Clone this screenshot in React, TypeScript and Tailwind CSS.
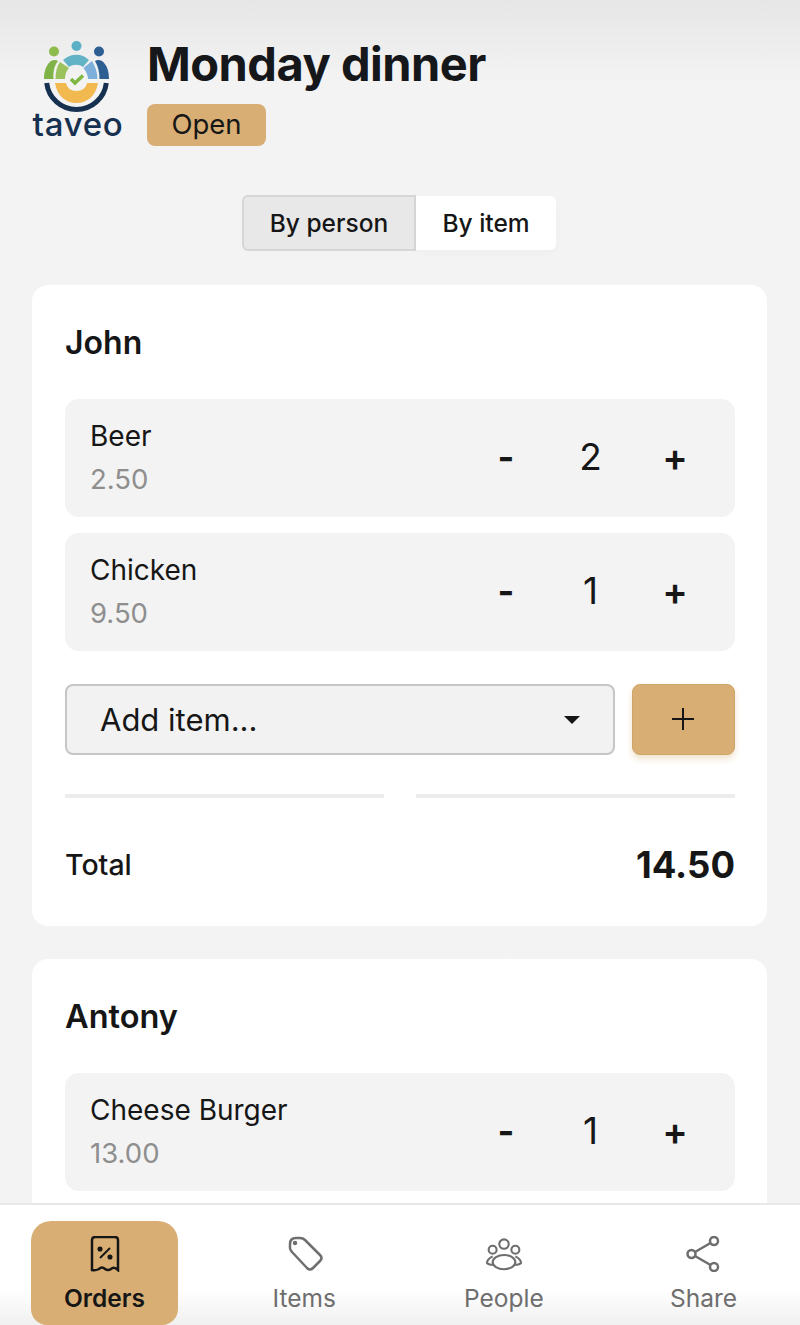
import React from "react";

const font = { fontFamily: "Inter, sans-serif" };

function Logo() {
  return (
    <svg width="92" height="104" viewBox="32 40 92 104" className="shrink-0">
      <circle cx="54" cy="51.500" r="5" fill="#8dbb4c" />
      <circle cx="76.500" cy="46" r="5" fill="#5ab0c4" />
      <circle cx="99" cy="51.500" r="5" fill="#2d5f93" />
      <path d="M44 79 C44 70 47 64 51 61 Q55 59 58 61 C54 66 53 72 53.500 79 Z" fill="#7fb347" />
      <path d="M55.500 79 C55.500 72 57 66 60 62 L69 68 C66 71 65 75 65 79 Z" fill="#9cc25e" />
      <path d="M63 60 C71 53 82 53 89 60 L83 67 C79 64 73 64 69 67 Z" fill="#62b3c5" />
      <path d="M92 61 C95 66 97.500 72 97.500 79 L88 79 C88 75 86 71 83.500 68 Z" fill="#7cb0da" />
      <path d="M95 61 Q98 59 102 61 C107 65 109 71 109 79 L99.500 79 C99.500 72 98 66 95 61 Z" fill="#2d5f93" />
      <path d="M46.700 83 A30 30 0 0 0 106.300 83" fill="none" stroke="#16304f" strokeWidth="5" />
      <path d="M55 83 H98 C96 96 87 103 76.500 103 C66 103 57 96 55 83 Z M66 83 C67 88 71 91 76.500 91 C82 91 86 88 87 83 Z" fill="#f1b94f" fillRule="evenodd" />
      <path d="M71 79 L75 83 L83 75.500" fill="none" stroke="#7eb843" strokeWidth="3.500" />
      <text x="78" y="136" textAnchor="middle" fontFamily="Inter, sans-serif" fontSize="33" fontWeight="500" letterSpacing="0.7" fill="#16304f">taveo</text>
    </svg>
  );
}

function Row({ name, price, qty }: { name: string; price: string; qty: string }) {
  return (
    <div className="flex h-[118px] items-center rounded-[14px] bg-[#f3f3f3] pl-[25px] pr-[18px]">
      <div className="mt-[-2px] flex-1">
        <div className="text-[28px] leading-[36px] text-[#161616]">{name}</div>
        <div className="mt-[7px] text-[27.5px] leading-[36px] text-[#8e8e8e]">{price}</div>
      </div>
      <div className="mt-[-2px] flex w-[253px] shrink-0 items-center text-[#161616]">
        <span className="w-[84px] text-center text-[36px] font-bold">-</span>
        <span className="w-[85px] text-center text-[37px]">{qty}</span>
        <span className="w-[84px] text-center text-[38px] font-semibold">+</span>
      </div>
    </div>
  );
}

function Tab({ label, active, children }: { label: string; active?: boolean; children: React.ReactNode }) {
  return (
    <div className={`flex h-[104px] w-[147px] flex-col items-center rounded-t-[20px] rounded-b-[16px] pt-[15px] ${active ? "bg-[#d8ae74] text-[#161616]" : "text-[#6e6e6e]"}`}>
      <div className="flex h-[36px] items-center justify-center">{children}</div>
      <span className={`mt-[11px] text-[24.5px] leading-[30px] ${active ? "font-semibold" : ""}`}>{label}</span>
    </div>
  );
}

export default function App() {
  return (
    <div style={font} className="relative flex h-[1325px] w-[800px] flex-col overflow-hidden bg-[#f3f3f3] text-[#161616]">
      <div className="flex-1 overflow-hidden bg-gradient-to-b from-[#e6e6e6] to-[#f3f3f3] to-[6%] pl-[32px] pr-[33px]">
        <header className="flex h-[195px] items-start pt-[40px]">
          <Logo />
          <div className="ml-[23px]">
            <h1 className="mt-[-1px] text-[47px] font-bold leading-[50px] tracking-[-0.5px] text-[#16171a]">Monday dinner</h1>
            <span className="mt-[15px] inline-block h-[42px] w-[119px] rounded-[8px] bg-[#d8ae74] text-center text-[27.5px] leading-[40px]">Open</span>
          </div>
        </header>

        <div className="flex justify-center pr-[1px]">
          <div className="flex h-[56px] w-[314px] text-[24.5px] font-medium">
            <div className="flex w-[174px] items-center justify-center rounded-l-[6px] border-2 border-[#d6d6d6] bg-[#e8e8e8] pt-[1px]">By person</div>
            <div className="my-[1px] flex flex-1 items-center justify-center rounded-r-[6px] bg-white pt-[1px] shadow-[0_4px_8px_rgba(0,0,0,0.02)]">By item</div>
          </div>
        </div>

        <section className="mt-[34px] rounded-[16px] bg-white pb-[39px] pl-[33px] pr-[32px] pt-[39px]">
          <h2 className="text-[32px] font-semibold leading-[38px]">John</h2>
          <div className="mt-[37px] flex flex-col gap-[16px]">
            <Row name="Beer" price="2.50" qty="2" />
            <Row name="Chicken" price="9.50" qty="1" />
          </div>
          <div className="mt-[33px] flex gap-[17px]">
            <div className="relative flex h-[71px] flex-1 items-center rounded-[8px] border-2 border-[#c6c6c6] bg-[#f2f2f2] pl-[33px] pt-[2px] text-[31px]">
              Add item...
              <svg width="16" height="8" viewBox="0 0 16 8" className="absolute right-[33px] top-[30px]">
                <path d="M0 0 H16 L8 8 Z" fill="#161616" />
              </svg>
            </div>
            <button className="flex h-[71px] w-[103px] items-center justify-center rounded-[8px] border border-[#cfa469] bg-[#d8ae74] shadow-[0_4px_6px_rgba(216,174,116,0.35)]">
              <svg width="24" height="24" viewBox="0 0 24 24" stroke="#161616" strokeWidth="2" className="mr-[2px] mt-[-2px]">
                <path d="M12 1 V23 M1 12 H23" />
              </svg>
            </button>
          </div>
          <div className="mt-[39px] flex gap-[32px]">
            <div className="h-[4px] flex-1 bg-[#ececec]" />
            <div className="h-[4px] flex-1 bg-[#ececec]" />
          </div>
          <div className="mt-[45px] flex items-center justify-between">
            <span className="text-[28.5px] font-medium">Total</span>
            <span className="text-[36.500px] font-bold leading-[44px]">14.50</span>
          </div>
        </section>

        <section className="mt-[33px] rounded-[16px] bg-white pb-[32px] pl-[33px] pr-[32px] pt-[39px]">
          <h2 className="text-[32.5px] font-semibold leading-[38px]">Antony</h2>
          <div className="mt-[37px] flex flex-col gap-[16px]">
            <Row name="Cheese Burger" price="13.00" qty="1" />
          </div>
        </section>
      </div>

      <nav className="absolute bottom-0 left-0 flex h-[122px] w-[800px] items-end justify-between border-t-2 border-[#e8e8e8] bg-gradient-to-b from-white from-70% to-[#f0f0f0] pl-[31px] pr-[23px]">
        <Tab label="Orders" active>
          <svg width="30" height="36" viewBox="0 0 30 36" fill="none" stroke="currentColor" strokeWidth="2.500">
            <path d="M2 34 V4 Q2 1 5 1 H25 Q28 1 28 4 V34 Q24 30 21 33 Q18 35 15 33 Q12 30 9 33 Q5 35 2 34 Z" />
            <path d="M10 22 L20 12" strokeWidth="2" />
            <circle cx="10" cy="13" r="1.300" fill="currentColor" />
            <circle cx="20" cy="21" r="1.300" fill="currentColor" />
          </svg>
        </Tab>
        <Tab label="Items">
          <svg width="36" height="36" viewBox="0 0 36 36" fill="none" stroke="currentColor" strokeWidth="2.500" className="ml-[3px]">
            <path d="M2 8 Q2 2 8 2 H12 Q15 2 17 4 L32 19 Q35 22 32 25 L25 32 Q22 35 19 32 L4 16 Q2 14 2 12 Z" />
            <circle cx="7" cy="7" r="1" fill="currentColor" />
          </svg>
        </Tab>
        <Tab label="People">
          <svg width="36" height="33" viewBox="0 0 38 34" fill="none" stroke="currentColor" strokeWidth="2.200">
            <circle cx="19" cy="6" r="5" />
            <circle cx="7" cy="12" r="4.200" />
            <circle cx="31" cy="12" r="4.200" />
            <ellipse cx="19" cy="25" rx="12" ry="7.500" />
            <path d="M7 19 Q1 22 1 26 Q3 28 8 28" />
            <path d="M31 19 Q37 22 37 26 Q35 28 30 28" />
          </svg>
        </Tab>
        <Tab label="Share">
          <svg width="34" height="36" viewBox="0 0 34 36" fill="none" stroke="currentColor" strokeWidth="2.500">
            <circle cx="5.500" cy="18" r="4" />
            <circle cx="28" cy="5" r="4" />
            <circle cx="28" cy="31" r="4" />
            <path d="M9 16 L24.500 7 M9 20 L24.500 29" />
          </svg>
        </Tab>
      </nav>
    </div>
  );
}
